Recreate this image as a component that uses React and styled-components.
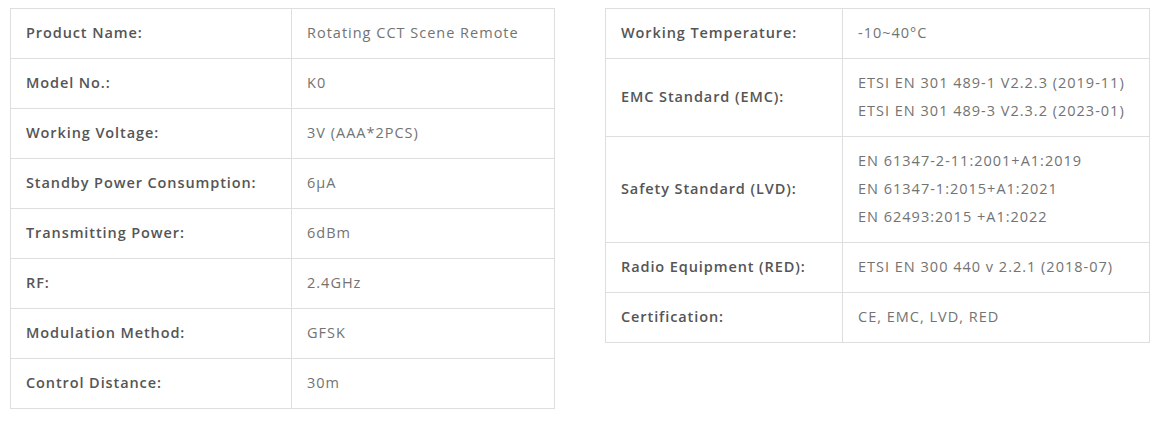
import styled, { createGlobalStyle } from "styled-components"

const GlobalStyle = createGlobalStyle`
  body {
    margin: 0;
    background: #fff;
    font-family: "Open Sans", "Liberation Sans", sans-serif;
  }
`

const Page = styled.div`
  display: flex;
  align-items: flex-start;
  gap: 50px;
  padding: 8px 0 0 10px;
`

const SpecTable = styled.table`
  width: 545px;
  border-collapse: collapse;
  table-layout: fixed;
`

const Label = styled.th`
  width: ${({ $w }) => $w}px;
  padding: 10px 15px 11px;
  border: 1px solid #dedede;
  text-align: left;
  font-size: 14.5px;
  letter-spacing: 0.9px;
  line-height: 28px;
  font-weight: 600;
  color: #555;
`

const Value = styled.td`
  padding: 10px 15px 11px;
  border: 1px solid #dedede;
  font-size: 14.5px;
  letter-spacing: 1px;
  line-height: 28px;
  font-weight: 400;
  color: #737373;
`

const Line = styled.div``

const left = [
  ["Product Name:", ["Rotating CCT Scene Remote"]],
  ["Model No.:", ["K0"]],
  ["Working Voltage:", ["3V (AAA*2PCS)"]],
  ["Standby Power Consumption:", ["6μA"]],
  ["Transmitting Power:", ["6dBm"]],
  ["RF:", ["2.4GHz"]],
  ["Modulation Method:", ["GFSK"]],
  ["Control Distance:", ["30m"]],
]

const right = [
  ["Working Temperature:", ["-10~40°C"]],
  ["EMC Standard (EMC):", ["ETSI EN 301 489-1 V2.2.3 (2019-11)", "ETSI EN 301 489-3 V2.3.2 (2023-01)"]],
  ["Safety Standard (LVD):", ["EN 61347-2-11:2001+A1:2019", "EN 61347-1:2015+A1:2021", "EN 62493:2015 +A1:2022"]],
  ["Radio Equipment (RED):", ["ETSI EN 300 440 v 2.2.1 (2018-07)"]],
  ["Certification:", ["CE, EMC, LVD, RED"]],
]

function Specs({ rows, labelWidth }) {
  return (
    <SpecTable>
      <tbody>
        {rows.map(([label, lines]) => (
          <tr key={label}>
            <Label $w={labelWidth}>{label}</Label>
            <Value>
              {lines.map((l) => (
                <Line key={l}>{l}</Line>
              ))}
            </Value>
          </tr>
        ))}
      </tbody>
    </SpecTable>
  )
}

export default function App() {
  return (
    <>
      <GlobalStyle />
      <Page>
        <Specs rows={left} labelWidth={250} />
        <Specs rows={right} labelWidth={206} />
      </Page>
    </>
  )
}
